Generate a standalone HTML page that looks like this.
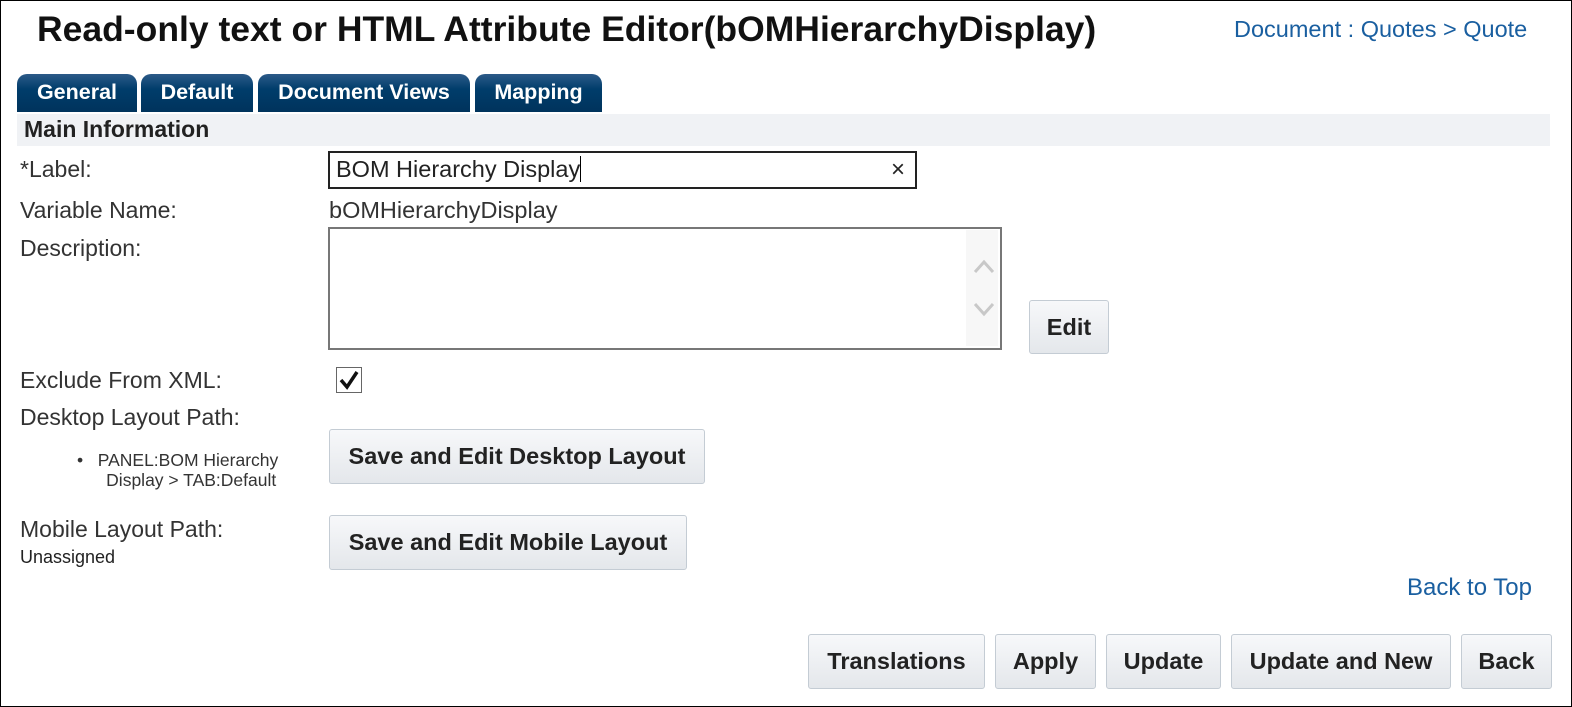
<!DOCTYPE html>
<html><head><meta charset="utf-8"><style>
body{margin:0;width:1572px;height:707px;position:relative;background:#fff;font-family:"Liberation Sans",Arial,sans-serif;overflow:hidden;color:#222}
.frame{position:absolute;left:0;top:0;width:1570px;height:705px;border:1px solid #000}
.a{position:absolute;white-space:nowrap}
.tab{position:absolute;top:74px;height:38px;background:linear-gradient(#2c5a88,#003d6b 40%,#00335c);border-radius:10px 10px 0 0;color:#fff;font-weight:bold;font-size:21.5px;text-align:center;line-height:36px}
.btn{position:absolute;background:linear-gradient(#f7f8fa,#e4e7eb);border:1px solid #c4ccd4;border-radius:3px;font-weight:bold;font-size:23.5px;color:#222;text-align:center;box-sizing:border-box}
.lbl{font-size:23px;color:#333}
</style></head><body>
<div class="frame"></div>
<div class="a" style="left:37px;top:9px;font-size:35.5px;font-weight:bold;color:#111">Read-only text or HTML Attribute Editor(bOMHierarchyDisplay)</div>
<div class="a" style="left:1234px;top:16px;font-size:23.5px;color:#1a5fa0">Document : Quotes &gt; Quote</div>
<div class="tab" style="left:17px;width:120px">General</div>
<div class="tab" style="left:141px;width:112px">Default</div>
<div class="tab" style="left:258px;width:212px">Document Views</div>
<div class="tab" style="left:475px;width:127px">Mapping</div>
<div class="a" style="left:17px;top:114px;width:1533px;height:32px;background:#f0f2f5"></div>
<div class="a" style="left:24px;top:116px;font-size:23px;font-weight:bold;color:#222">Main Information</div>
<div class="a lbl" style="left:20px;top:156px">*Label:</div>
<div class="a" style="left:328px;top:151px;width:585px;height:34px;border:2px solid #222;box-sizing:content-box"></div>
<div class="a" style="left:336px;top:156px;font-size:23.5px;color:#222">BOM Hierarchy Display<span style="display:inline-block;width:1px;height:26px;background:#000;vertical-align:-5px"></span></div>
<div class="a" style="left:891px;top:156px;font-size:24px;color:#222">×</div>
<div class="a lbl" style="left:20px;top:197px">Variable Name:</div>
<div class="a" style="left:329px;top:197px;font-size:23.5px;color:#333">bOMHierarchyDisplay</div>
<div class="a lbl" style="left:20px;top:235px">Description:</div>
<div class="a" style="left:328px;top:227px;width:670px;height:119px;border:2px solid #777;background:#fff"></div>
<div class="a" style="left:966px;top:230px;width:32px;height:116px;background:#f7f7f7"></div>
<svg class="a" style="left:972px;top:256px" width="24" height="70"><polyline points="3,16 12,6 21,16" fill="none" stroke="#c8c8c8" stroke-width="3"/><polyline points="3,48 12,58 21,48" fill="none" stroke="#c8c8c8" stroke-width="3"/></svg>
<div class="btn" style="left:1029px;top:300px;width:80px;height:54px;line-height:52px">Edit</div>
<div class="a lbl" style="left:20px;top:367px">Exclude From XML:</div>
<div class="a" style="left:336px;top:367px;width:24px;height:24px;border:1px solid #666;background:#fff"></div>
<svg class="a" style="left:338px;top:369px" width="22" height="22"><polyline points="3,11 9,18 19,3" fill="none" stroke="#111" stroke-width="3.5"/></svg>
<div class="a lbl" style="left:20px;top:404px">Desktop Layout Path:</div>
<div class="a" style="left:77px;top:450px;font-size:17.5px;color:#333;line-height:20px">•&nbsp;&nbsp;&nbsp;PANEL:BOM Hierarchy<br>&nbsp;&nbsp;&nbsp;&nbsp;&nbsp;&nbsp;Display &gt; TAB:Default</div>
<div class="btn" style="left:329px;top:429px;width:376px;height:55px;line-height:53px">Save and Edit Desktop Layout</div>
<div class="a lbl" style="left:20px;top:516px">Mobile Layout Path:</div>
<div class="a" style="left:20px;top:547px;font-size:18px;color:#222">Unassigned</div>
<div class="btn" style="left:329px;top:515px;width:358px;height:55px;line-height:53px">Save and Edit Mobile Layout</div>
<div class="a" style="left:1407px;top:574px;font-size:24px;color:#1a5fa0">Back to Top</div>
<div class="btn" style="left:808px;top:634px;width:177px;height:55px;line-height:53px">Translations</div>
<div class="btn" style="left:995px;top:634px;width:101px;height:55px;line-height:53px">Apply</div>
<div class="btn" style="left:1106px;top:634px;width:115px;height:55px;line-height:53px">Update</div>
<div class="btn" style="left:1231px;top:634px;width:220px;height:55px;line-height:53px">Update and New</div>
<div class="btn" style="left:1461px;top:634px;width:91px;height:55px;line-height:53px">Back</div>
</body></html>
